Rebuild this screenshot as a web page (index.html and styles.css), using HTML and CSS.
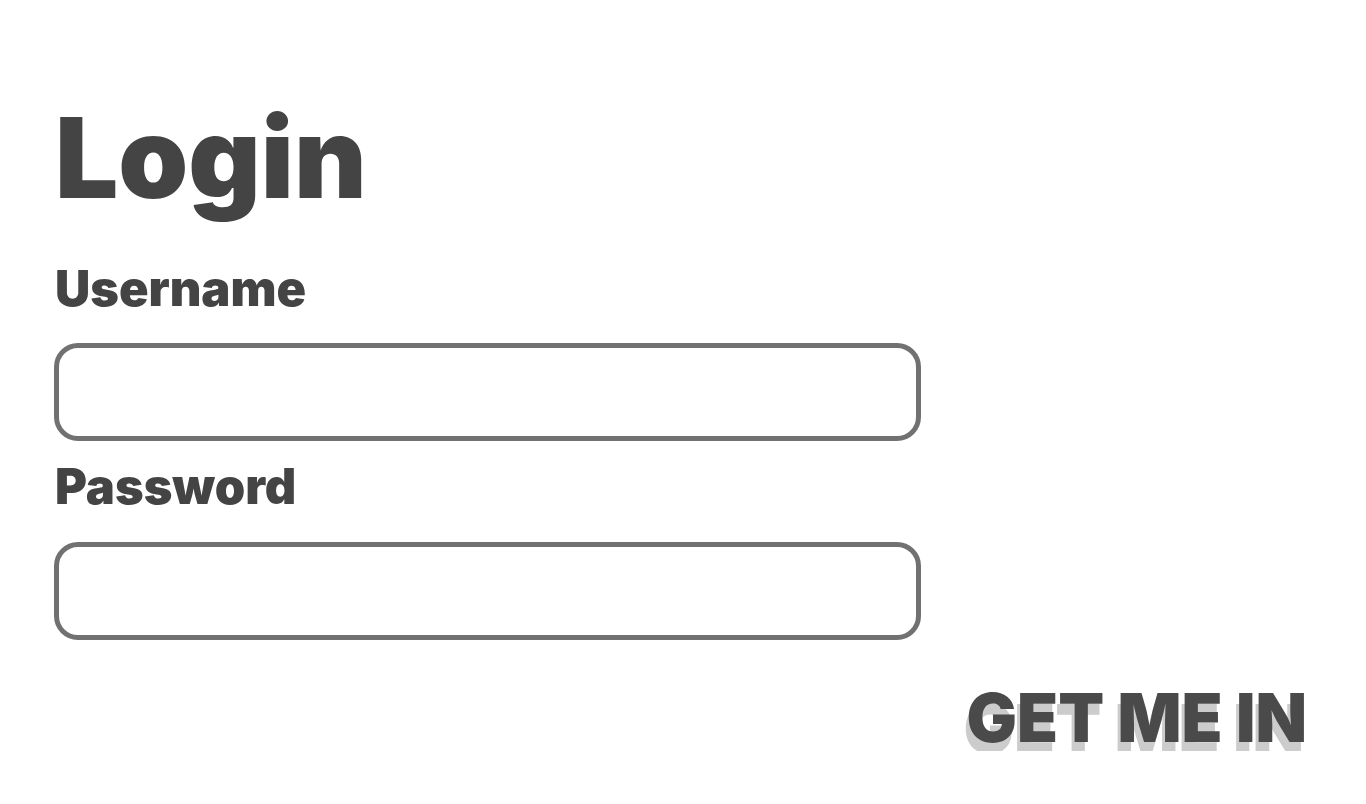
FILE: index.html
```html
<!DOCTYPE html>
<html lang="en">
<head>
<meta charset="utf-8">
<title>Login</title>
<link rel="stylesheet" href="styles.css">
</head>
<body>
<main class="page">
  <h1 class="title">Login</h1>
  <form class="form">
    <label class="label" for="username">Username</label>
    <input class="field field-user" id="username" type="text">
    <label class="label" for="password">Password</label>
    <input class="field field-pass" id="password" type="password">
    <button class="submit" type="button">GET ME IN</button>
  </form>
</main>
</body>
</html>
```

FILE: styles.css
```css
html, body {
  margin: 0;
  padding: 0;
  background: #ffffff;
}

body {
  font-family: "Inter", "Liberation Sans", sans-serif;
  color: #444444;
}

.page {
  display: flex;
  flex-direction: column;
  padding: 101px 59px 0 54px;
}

.title {
  margin: 0 0 0 1px;
  font-size: 112px;
  line-height: 1;
  font-weight: 900;
}

.form {
  display: flex;
  flex-direction: column;
  align-items: flex-start;
  margin-top: 52px;
}

.label {
  font-size: 48.8px;
  line-height: 1;
  font-weight: 900;
  margin-left: 1px;
}

.field {
  box-sizing: border-box;
  width: 867px;
  height: 98px;
  border: 5px solid #717171;
  border-radius: 24px;
  background: #ffffff;
  margin: 29px 0 22px;
  padding: 0 20px;
  font-family: inherit;
  font-size: 30px;
  outline: none;
}

.field-pass {
  margin-top: 30px;
  margin-bottom: 44px;
}

.submit {
  align-self: flex-end;
  border: 0;
  background: none;
  padding: 0;
  font-family: inherit;
  font-size: 67px;
  line-height: 1;
  font-weight: 900;
  color: #4a4a4a;
  text-shadow: -3px 11px 0 #cccccc;
  cursor: pointer;
}
```
